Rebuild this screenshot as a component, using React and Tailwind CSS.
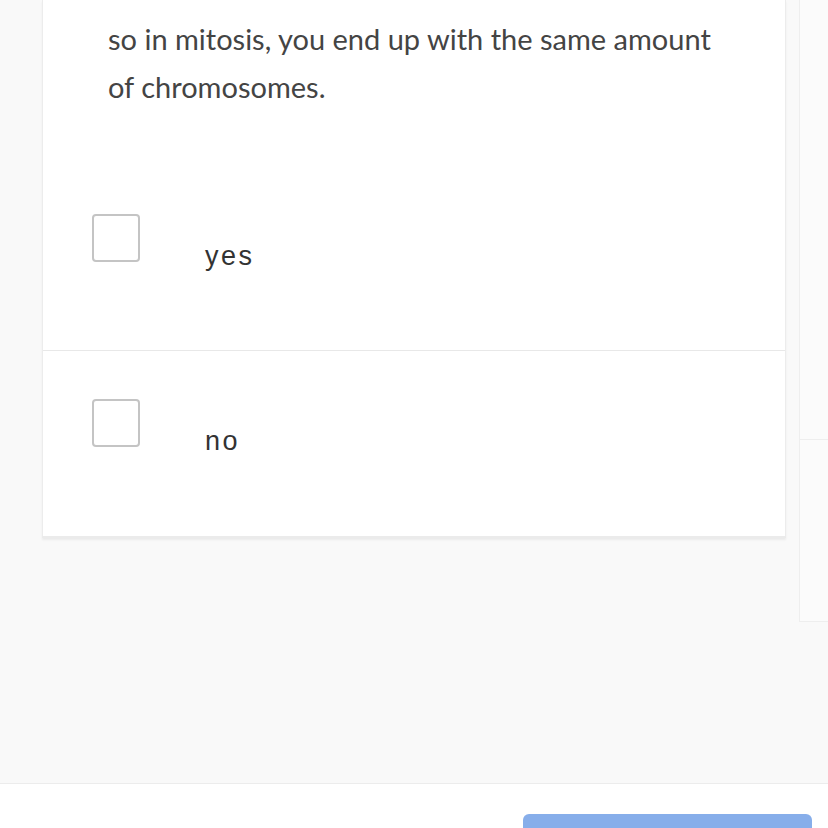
import React from "react";

const options = ["yes", "no"];

const Option = ({ label, last }) => (
  <div
    className={`flex items-start h-[185px] pl-[49px] ${
      last ? "" : "border-b border-[#e8e8e8]"
    }`}
  >
    <div className="mt-[48px] w-[48px] h-[48px] border-2 border-[#c4c4c4] rounded-[4px] bg-white shrink-0"></div>
    <span
      className="ml-[65px] mt-[66px] text-[27px] leading-[48px] tracking-[2.5px] text-[#333]"
      style={{ fontFamily: '"Liberation Sans", Arial, sans-serif' }}
    >
      {label}
    </span>
  </div>
);

export default function App() {
  return (
    <div
      className="w-[828px] h-[828px] overflow-hidden bg-[#f9f9f9] flex flex-col"
      style={{ fontFamily: "Lato, sans-serif" }}
    >
      <div className="flex items-start">
        <div className="ml-[42px] w-[744px] bg-white border-l border-r border-[#ececec] shadow-[0_2px_2px_rgba(0,0,0,0.06)] border-b-2 border-b-[#ebebeb]">
          <p className="pl-[65px] pr-[56px] pt-[15px] pb-[55px] text-[29px] font-normal leading-[48px] text-[#444]">
            so in mitosis, you end up with the same amount of chromosomes.
          </p>
          {options.map((o, i) => (
            <Option key={o} label={o} last={i === options.length - 1} />
          ))}
        </div>
        <div className="ml-[13px] flex-1 h-[622px] bg-[#fbfbfb] border-l border-b border-[#eeeeee] flex flex-col">
          <div className="h-[440px] border-b border-[#eeeeee]"></div>
        </div>
      </div>
      <div className="flex-1"></div>
      <div className="h-[45px] bg-white border-t border-[#ececec] flex justify-end pr-[16px] pt-[30px]">
        <div className="w-[289px] h-[20px] bg-[#87aeea] rounded-t-[6px]"></div>
      </div>
    </div>
  );
}
